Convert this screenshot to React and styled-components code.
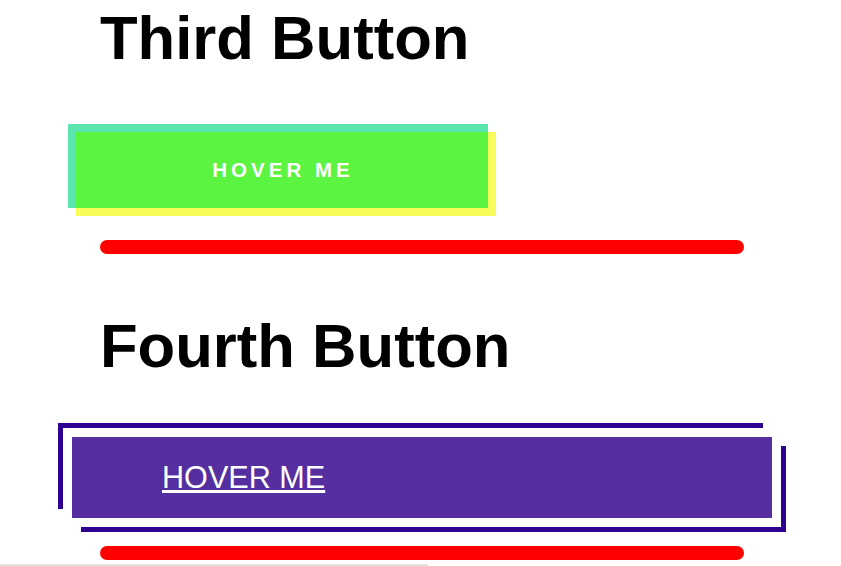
import React from 'react'
import styled, { createGlobalStyle } from 'styled-components'

const GlobalStyle = createGlobalStyle`
  body {
    margin: 0;
    background: #fff;
    font-family: "Liberation Sans", Arial, sans-serif;
  }
`;

const Page = styled.div`
  padding-top: 2px;
  overflow: hidden;
`;
const Section = styled.section`
  display: flex;
  flex-direction: column;
  align-items: flex-start;
  padding-left: 100px;
`;
const Heading = styled.h1`
  margin: ${p => p.$top || 0}px 0 0;
  font-size: 61.6px;
  line-height: 72px;
  font-weight: 700;
  color: #000;
`;
const Divider = styled.div`
  margin-top: ${p => p.$top}px;
  width: 644px;
  height: 14px;
  border-radius: 7px;
  background: #ff0000;
`;

// third button: cyan block, yellow shadow, green where they overlap
const GlowButton = styled.button`
  position: relative;
  margin: 50px 0 0 -32px;
  width: 420px;
  height: 84px;
  padding: 8px 0 0 8px;
  border: none;
  background: #5be6b0;
  box-shadow: 8px 8px 0 #f8fc5a;
  color: #fff;
  font-family: "Liberation Sans", Arial, sans-serif;
  font-size: 20.5px;
  font-weight: 700;
  letter-spacing: 4px;
  cursor: pointer;

  &::before {
    content: '';
    position: absolute;
    top: 8px;
    left: 8px;
    right: 0;
    bottom: 0;
    background: #5af441;
  }
`;
const GlowLabel = styled.span`
  position: relative;
  display: flex;
  align-items: center;
  justify-content: center;
  height: 100%;
  padding-left: 2px;
`;

// fourth button: purple block with offset corner frames
const FrameButton = styled.a`
  position: relative;
  display: flex;
  align-items: center;
  box-sizing: border-box;
  margin: 55px 0 0 -28px;
  width: 700px;
  height: 81px;
  padding-left: 90px;
  background: #552e9f;
  color: #fff;
  font-size: 30.6px;
  text-decoration: underline;
  cursor: pointer;

  &::before,
  &::after {
    content: '';
    position: absolute;
    width: 100%;
    height: 100%;
    border: 0 solid #2f0190;
  }
  &::before {
    top: -14px;
    left: -14px;
    border-top-width: 5px;
    border-left-width: 5px;
  }
  &::after {
    right: -14px;
    bottom: -14px;
    border-bottom-width: 5px;
    border-right-width: 5px;
  }
`;
const NextRule = styled.div`
  margin-top: 4px;
  width: 428px;
  height: 2px;
  background: #e3e3e3;
`;

const App = () => (
    <Page>
        <GlobalStyle/>
        <Section>
            <Heading>Third Button</Heading>
            <GlowButton>
                <GlowLabel>HOVER ME</GlowLabel>
            </GlowButton>
            <Divider $top={32}/>
        </Section>
        <Section>
            <Heading $top={56}>Fourth Button</Heading>
            <FrameButton>HOVER ME</FrameButton>
            <Divider $top={28}/>
        </Section>
        <NextRule/>
    </Page>
)

export default App
